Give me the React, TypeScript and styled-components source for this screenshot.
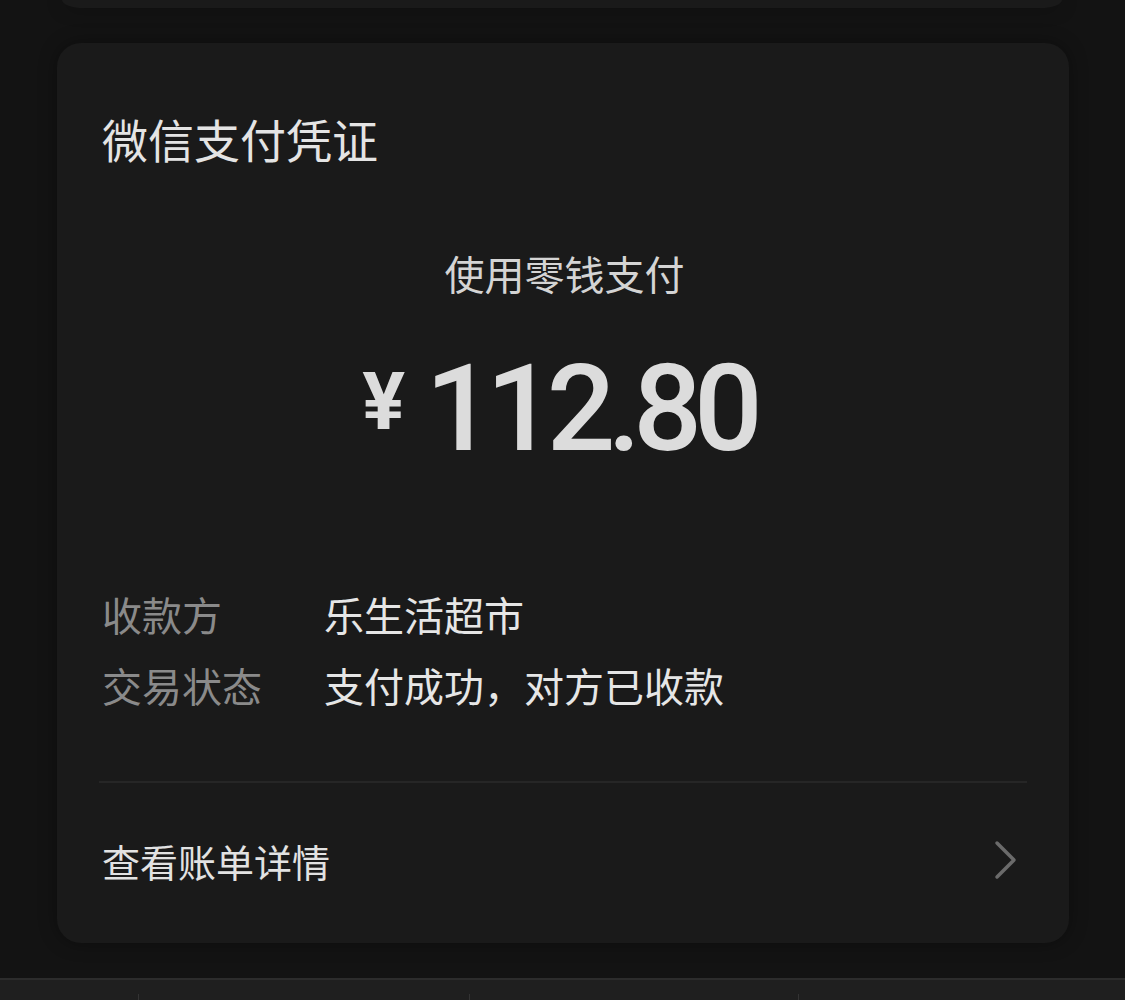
import React from 'react';
import styled, { createGlobalStyle } from 'styled-components';

const GlobalStyle = createGlobalStyle`
  html, body {
    margin: 0;
    padding: 0;
    background: #131313;
    overflow: hidden;
  }
  body {
    font-family: "Noto Sans CJK SC", "Noto Sans", sans-serif;
    -webkit-font-smoothing: antialiased;
  }
`;

const Page = styled.div`
  width: 1125px;
  height: 1000px;
  display: flex;
  flex-direction: column;
  overflow: hidden;
`;

const PrevCard = styled.div`
  height: 8px;
  flex-shrink: 0;
  margin: 0 63px 0 62px;
  background: #1a1a1a;
  border-radius: 0 0 22px 22px / 0 0 8px 8px;
  box-shadow: 0 0 18px rgba(0, 0, 0, 0.35);
`;

const Card = styled.section`
  margin: 35px 56px 0 57px;
  height: 900px;
  flex-shrink: 0;
  box-sizing: border-box;
  padding: 68px 42px 0 45px;
  background: #1a1a1a;
  border-radius: 24px;
  box-shadow: 0 0 18px rgba(0, 0, 0, 0.35);
  display: flex;
  flex-direction: column;
`;

const Title = styled.h1`
  margin: 0;
  font-size: 46px;
  line-height: 54px;
  font-weight: 400;
  color: #e4e4e4;
`;

const Method = styled.div`
  margin-top: 84px;
  text-align: center;
  font-size: 40px;
  line-height: 48px;
  color: #d4d4d4;
`;

const Amount = styled.div`
  margin-top: 42px;
  height: 140px;
  display: flex;
  justify-content: center;
  align-items: center;
  color: #dcdcdc;
  font-family: Roboto, "Liberation Sans", sans-serif;
`;

const Yen = styled.span`
  font-size: 80px;
  line-height: 80px;
  font-weight: 700;
  margin: 0 20px 14px 0;
`;

const Digits = styled.span`
  font-size: 121px;
  line-height: 140px;
  font-weight: 500;
  letter-spacing: -8px;
  margin-right: 12px;
`;

const InfoList = styled.div`
  margin-top: 99px;
  display: flex;
  flex-direction: column;
`;

const InfoRow = styled.div`
  display: grid;
  grid-template-columns: 222px 1fr;
  height: 71px;
  align-items: center;
  font-size: 40px;
`;

const Label = styled.span`
  color: #8a8a8a;
`;

const Value = styled.span`
  color: #e6e6e6;
`;

const Divider = styled.hr`
  margin: 61px 0 0 -3px;
  border: none;
  height: 2px;
  flex-shrink: 0;
  background: #262626;
`;

const DetailRow = styled.div`
  flex: 1;
  display: flex;
  align-items: center;
  justify-content: space-between;
  padding: 0 8px 6px 0;
  font-size: 38px;
  color: #e2e2e2;
`;

const BottomBar = styled.div`
  margin-top: 35px;
  height: 60px;
  flex-shrink: 0;
  background: #1f1f1f;
  border-top: 2px solid #2c2c2c;
  display: flex;
  align-items: flex-start;
  padding-top: 14px;
`;

const BarCell = styled.div<{ $w: number }>`
  width: ${p => p.$w}px;
  height: 30px;
  border-right: 1px solid #333;
`;

const Chevron = () => (
  <svg width="26" height="40" viewBox="0 0 26 40">
    <polyline
      points="4,3 21,20 4,37"
      fill="none"
      stroke="#6b6b6b"
      strokeWidth="3.5"
      strokeLinecap="round"
      strokeLinejoin="round"
    />
  </svg>
);

const App: React.FC = () => {
  return (
    <>
      <GlobalStyle />
      <Page>
        <PrevCard />
        <Card>
          <Title>微信支付凭证</Title>
          <Method>使用零钱支付</Method>
          <Amount>
            <Yen>¥</Yen>
            <Digits>112.80</Digits>
          </Amount>
          <InfoList>
            <InfoRow>
              <Label>收款方</Label>
              <Value>乐生活超市</Value>
            </InfoRow>
            <InfoRow>
              <Label>交易状态</Label>
              <Value>支付成功，对方已收款</Value>
            </InfoRow>
          </InfoList>
          <Divider />
          <DetailRow>
            <span>查看账单详情</span>
            <Chevron />
          </DetailRow>
        </Card>
        <BottomBar>
          <BarCell $w={138} />
          <BarCell $w={330} />
          <BarCell $w={328} />
        </BottomBar>
      </Page>
    </>
  );
};

export default App;
